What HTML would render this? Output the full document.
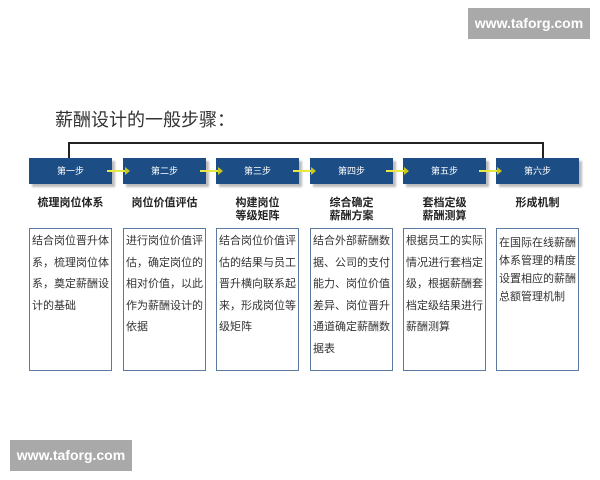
<!DOCTYPE html>
<html><head><meta charset="utf-8"><style>
body{margin:0;width:600px;height:480px;background:#fff;position:relative;overflow:hidden;font-family:"Liberation Sans","Noto Sans CJK SC",sans-serif}
.wm{position:absolute;background:#a9a9a9;color:#fff;font-size:14px;font-weight:bold;text-align:center;line-height:31px;width:122px;height:31px}
.title{position:absolute;left:55px;top:106px;font-size:18px;color:#333}
.step{position:absolute;top:158px;width:83px;height:26px;background:#1c4e85;color:#fff;font-size:9px;text-align:center;line-height:26px;box-shadow:3px 3px 2px #bbb}
.lab{position:absolute;top:197px;width:83px;text-align:center;font-size:11px;font-weight:bold;color:#222;line-height:13px}
.box{position:absolute;top:228px;height:143px;border:1px solid #5a7aa0;font-size:11px;line-height:21.5px;color:#333;padding:2px 1px 0 2px;box-sizing:border-box;width:83px;word-break:break-all}
.arr{position:absolute;top:170px;width:20px;height:2px;background:#e8e840}
.arr:after{content:"";position:absolute;right:-3px;top:-3px;border-left:5px solid #c8c820;border-top:4px solid transparent;border-bottom:4px solid transparent}
</style></head><body>
<div class="wm" style="left:468px;top:8px">www.taforg.com</div>
<div class="wm" style="left:10px;top:440px">www.taforg.com</div>
<div class="title">薪酬设计的一般步骤：</div>
<div style="position:absolute;left:68px;top:142px;width:475px;height:2px;background:#222"></div>
<div style="position:absolute;left:68px;top:142px;width:2px;height:16px;background:#222"></div>
<div style="position:absolute;left:542px;top:142px;width:2px;height:16px;background:#222"></div>
<div class="step" style="left:29px">第一步</div>
<div class="step" style="left:123px">第二步</div>
<div class="step" style="left:216px">第三步</div>
<div class="step" style="left:310px">第四步</div>
<div class="step" style="left:403px">第五步</div>
<div class="step" style="left:496px">第六步</div>
<div class="arr" style="left:107px"></div>
<div class="arr" style="left:200px"></div>
<div class="arr" style="left:293px"></div>
<div class="arr" style="left:386px"></div>
<div class="arr" style="left:479px"></div>
<div class="lab" style="left:29px">梳理岗位体系</div>
<div class="lab" style="left:123px">岗位价值评估</div>
<div class="lab" style="left:216px">构建岗位<br>等级矩阵</div>
<div class="lab" style="left:310px">综合确定<br>薪酬方案</div>
<div class="lab" style="left:403px">套档定级<br>薪酬测算</div>
<div class="lab" style="left:496px">形成机制</div>
<div class="box" style="left:29px">结合岗位晋升体系，梳理岗位体系，奠定薪酬设计的基础</div>
<div class="box" style="left:123px">进行岗位价值评估，确定岗位的相对价值，以此作为薪酬设计的依据</div>
<div class="box" style="left:216px">结合岗位价值评估的结果与员工晋升横向联系起来，形成岗位等级矩阵</div>
<div class="box" style="left:310px">结合外部薪酬数据、公司的支付能力、岗位价值差异、岗位晋升通道确定薪酬数据表</div>
<div class="box" style="left:403px">根据员工的实际情况进行套档定级，根据薪酬套档定级结果进行薪酬测算</div>
<div class="box" style="left:496px;line-height:18px;padding-top:5px">在国际在线薪酬体系管理的精度设置相应的薪酬总额管理机制</div>
</body></html>
